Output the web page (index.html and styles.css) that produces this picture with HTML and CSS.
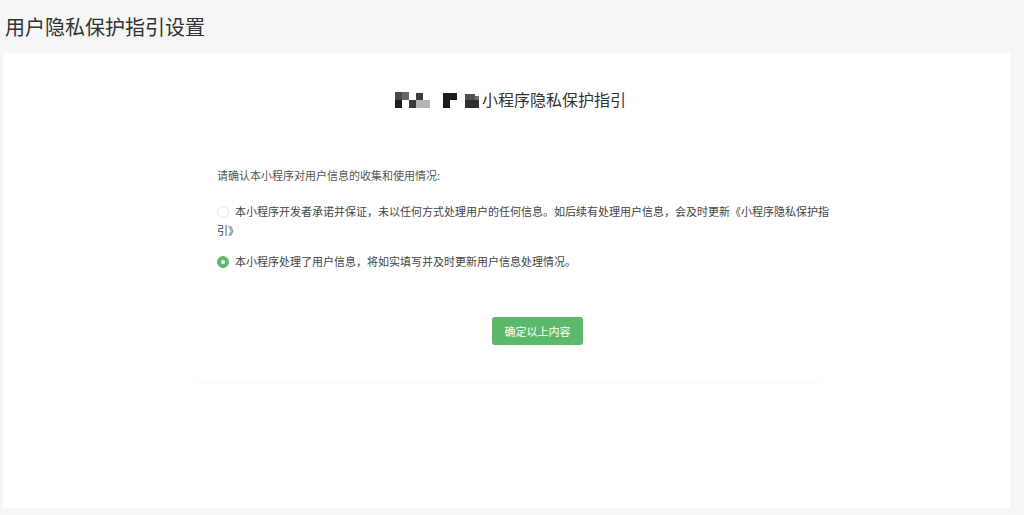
FILE: index.html
```html
<!DOCTYPE html>
<html lang="zh-CN">
<head>
<meta charset="utf-8">
<title>用户隐私保护指引设置</title>
<link rel="stylesheet" href="styles.css">
</head>
<body>
<h1 class="page-title">用户隐私保护指引设置</h1>
<div class="card">
  <h2 class="card-title"><svg class="mosaic" width="86" height="16" viewBox="0 0 86 16" aria-hidden="true">
    <rect x="0" y="0" width="7" height="8" fill="#4a4a4a"/>
    <rect x="7" y="0" width="7" height="8" fill="#666"/>
    <rect x="21" y="1" width="7" height="7" fill="#3c3c3c"/>
    <rect x="0" y="8" width="7" height="8" fill="#1e1e1e"/>
    <rect x="14" y="8" width="7" height="8" fill="#3a3a3a"/>
    <rect x="21" y="8" width="14" height="8" fill="#b4b4b4"/>
    <rect x="48" y="1" width="14" height="7" fill="#1c1c1c"/>
    <rect x="48" y="8" width="7" height="8" fill="#1a1a1a"/>
    <rect x="70" y="2" width="10" height="6" fill="#505050"/>
    <rect x="70" y="8" width="14" height="8" fill="#2e2e2e"/>
    <rect x="80" y="4" width="4" height="4" fill="#6e6e6e"/>
  </svg>小程序隐私保护指引</h2>
  <div class="form">
    <p class="prompt">请确认本小程序对用户信息的收集和使用情况:</p>
    <p class="option"><span class="radio"></span>本小程序开发者承诺并保证，未以任何方式处理用户的任何信息。如后续有处理用户信息，会及时更新《小程序隐私保护指引》</p>
    <p class="option option-second"><span class="radio checked"></span>本小程序处理了用户信息，将如实填写并及时更新用户信息处理情况。</p>
    <button class="confirm" type="button">确定以上内容</button>
  </div>
  <div class="divider"></div>
</div>
</body>
</html>
```
FILE: styles.css
```css
html, body {
  margin: 0;
  padding: 0;
}
body {
  background: #f5f6f8;
  font-family: "Noto Sans CJK SC", "Noto Sans", sans-serif;
  color: #333;
  width: 1024px;
  height: 515px;
  overflow: hidden;
}
.page-title {
  margin: 0;
  padding: 14px 0 0 5px;
  height: 39px;
  font-size: 20px;
  line-height: 26px;
  font-weight: 400;
  color: #333;
}
.card {
  margin: 0 14px 0 3px;
  height: 455px;
  background: #fff;
  padding-top: 35px;
  box-sizing: border-box;
}
.card-title {
  margin: 0;
  font-size: 16px;
  line-height: 22px;
  font-weight: 400;
  color: #333;
  text-align: center;
  padding-left: 8px;
}
.mosaic {
  vertical-align: -2px;
  margin-right: 1px;
}
.form {
  margin: 55px 0 0 214px;
  width: 618px;
}
.prompt {
  margin: 0;
  font-size: 11px;
  line-height: 20px;
  color: #555;
}
.option {
  margin: 17px 0 0;
  font-size: 11px;
  line-height: 19px;
  color: #444;
}
.option-second {
  margin-top: 12px;
}
.radio {
  display: inline-block;
  width: 12px;
  height: 12px;
  border-radius: 50%;
  border: 1px solid #e6e6e6;
  box-sizing: border-box;
  background: #fff;
  vertical-align: -2px;
  margin-right: 6px;
  position: relative;
}
.radio.checked {
  background: #5cb96b;
  border-color: #5cb96b;
}
.radio.checked::after {
  content: "";
  position: absolute;
  left: 3px;
  top: 3px;
  width: 4px;
  height: 4px;
  border-radius: 50%;
  background: #fff;
}
.confirm {
  display: block;
  margin: 46px 0 0 275px;
  width: 91px;
  height: 28px;
  border: none;
  border-radius: 3px;
  background: #5cb96b;
  color: #fff;
  font-family: "Noto Sans CJK SC", "Noto Sans", sans-serif;
  font-size: 11px;
  line-height: 28px;
  padding: 0;
  box-shadow: 0 2px 6px rgba(0, 0, 0, 0.03);
}
.divider {
  margin: 37px 0 0 192px;
  width: 626px;
  height: 2px;
  background: #fbfbfb;
}
```
